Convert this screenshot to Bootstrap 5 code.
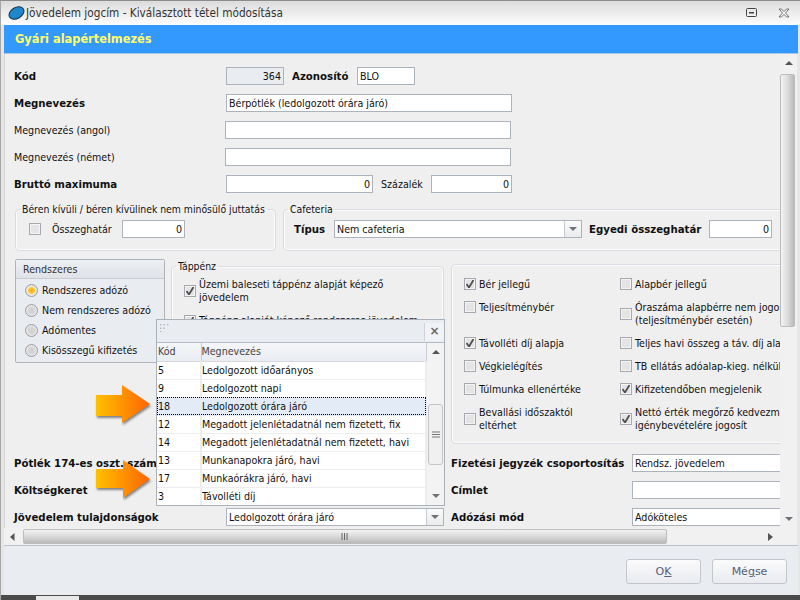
<!DOCTYPE html>
<html lang="hu">
<head>
<meta charset="utf-8">
<title>Jövedelem jogcím - Kiválasztott tétel módosítása</title>
<link href="https://cdn.jsdelivr.net/npm/bootstrap@5.3.0/dist/css/bootstrap.min.css" rel="stylesheet">
<style>
  html, body { margin: 0; width: 800px; height: 600px; overflow: hidden; }
  body { font-family: "DejaVu Sans", "Liberation Sans", sans-serif; font-stretch: condensed; font-size: 10.6px; line-height: 13px; color: #111; background: #e6e6e6; }
  b { font-family: "DejaVu Sans", sans-serif; font-stretch: normal; font-weight: 700; font-size: 10.2px; }
  .win { position: relative; width: 800px; height: 600px; overflow: hidden; border-top: 1px solid #8c8c8c; border-left: 1px solid #a6a6a6; }
  .titlebar { height: 24px; background: linear-gradient(#dcdcdc, #fdfdfd); padding-left: 7px; font-size: 11.7px; color: #333; gap: 1px; flex: none; }
  .hdr { height: 29px; margin: 0 2px 0 3px; background: #3399ff; color: #ffff66; font: 700 11.4px "DejaVu Sans", sans-serif; padding-left: 11px; flex: none; border-bottom: 1px solid #a9c6e2; }
  .mid { height: 474px; margin-left: 3px; margin-right: 3px; flex: none; }
  .view { width: 776px; overflow: hidden; background: #efeff0; padding: 13px 0 0 9px; border-left: 1px solid #d5d5d5; flex: none; }
  .vbar { width: 17px; background: #f1f1f1; position: relative; flex: none; }
  .rw { height: 18px; margin-bottom: 9px; white-space: nowrap; }
  .w211 { width: 211px; flex: none; }
  .w212 { width: 212px; flex: none; }
  .fld.form-control { height: 18px; min-height: 18px; border-radius: 0; border: 1px solid #adb3bc; padding: 0 2px; font-size: 10.6px; font-stretch: condensed; line-height: 13px; color: #111; background: #fff; box-shadow: none; flex: none; }
  .fld.num { text-align: right; }
  .fld.off { background: #e9ecf1; }
  .combo { height: 18px; border: 1px solid #adb3bc; background: #fff; padding-left: 2px; flex: none; }
  .combo > span:first-child { flex: 1; overflow: hidden; }
  .drop { width: 17px; height: 16px; border-left: 1px solid #c5cad1; background: linear-gradient(#fbfbfb, #e9ebee); flex: none; }
  .tri-d { width: 0; height: 0; border: 4px solid transparent; border-top: 4px solid #6e7278; border-bottom: 0; }
  .tri-u { width: 0; height: 0; border: 4px solid transparent; border-bottom: 4px solid #555; border-top: 0; }
  .grp { border: 1px solid #d8dce2; border-radius: 4px; margin: 0; padding: 0; min-width: 0; box-shadow: inset 0 0 0 1px #fbfbfb; flex: none; }
  .grp legend { font-size: 10.35px; line-height: 14px; margin: 0 0 0 4px; padding: 0 2px; white-space: nowrap; }
  .ck.form-check-input { width: 12px; height: 12px; margin: 0; border: 1px solid #a5a9af; border-radius: 0; background-color: #e4e4e4; box-shadow: inset 0 0 0 1px #f4f4f4; flex: none; }
  .ck.form-check-input:checked { background-color: #e4e4e4; border-color: #a5a9af; background-size: 10px 10px; background-position: center; background-image: url("data:image/svg+xml,%3Csvg xmlns='http://www.w3.org/2000/svg' viewBox='0 0 10 10'%3E%3Cpath d='M1.500 5 4 8.500 8.500 1' fill='none' stroke='%23505050' stroke-width='1.800'/%3E%3C/svg%3E"); }
  .rd.form-check-input { width: 13px; height: 13px; margin: 0; border: 1px solid #999da2; background-color: #dcdcdc; background-image: radial-gradient(circle, #cfcfcf 0, #d6d6d6 3px, #eeeeee 6px); flex: none; }
  .rd.form-check-input:checked { background-color: #e6e2d4; border-color: #999da2; background-image: radial-gradient(circle, #ffa800 0, #ffc93c 3px, #efe9d8 4px, #e2e2e2 6px); }
  .rpanel { width: 150px; height: 104px; border: 1px solid #aeb4bc; border-radius: 2px; background: #e9ecf1; flex: none; }
  .rpanel-h { height: 19px; padding-left: 7px; background: linear-gradient(#eceff3, #dfe2e7); border-bottom: 1px solid #c8ccd2; color: #333; }
  .rpanel-b { padding: 5px 0 0 9px; gap: 7px; }
  .rpanel-b label { height: 13px; gap: 4px; }
  .tapp { width: 273px; height: 187px; margin: 0 7px 0 6px; }
  .tapp-b { padding: 5px 0 0 12px; gap: 10px; }
  .right-g { width: 400px; height: 180px; margin-top: 5px; padding: 12px 0 0 12px; display: grid; grid-template-columns: 156px 1fr; grid-template-rows: 14px 27px 14px 14px 14px 27px; row-gap: 9px; white-space: nowrap; }
  .cell { gap: 3px; }
  .cell.top { align-items: flex-start !important; padding-top: 1px; }
  .low { margin-top: 8px; }
  .low-l { width: 437px; flex: none; }
  .low .rw:last-child { margin-bottom: 0; }
  .hbar { height: 17px; margin-left: 3px; margin-right: 3px; background: #f1f1f1; flex: none; position: relative; }
  .thumb-h { position: absolute; left: 19px; width: 644px; top: 1px; height: 15px; background: linear-gradient(#f2f2f2, #dcdcdc 45%, #b9b9b9); border: 1px solid #bdbdbd; border-radius: 2px; }
  .thumb-v { position: absolute; left: 0; top: 20px; width: 15px; height: 253px; background: linear-gradient(90deg, #f3f3f3, #dcdcdc 50%, #b9b9b9); border: 1px solid #bdbdbd; border-radius: 2px; }
  .foot { height: 50px; margin: 0 2px 0 3px; background: #e9ecf1; border-top: 1px solid #bcc1c8; padding: 13px 11px 0 0; gap: 11px; flex: none; }
  .gomb.btn { width: 75px; height: 25px; padding: 0; border: 1px solid #c3c7cd; border-radius: 3px; background: linear-gradient(#fbfbfc, #e9ebef); color: #54607a; font-size: 11px; line-height: 23px; }
  .gomb u { text-underline-offset: 1px; }
  .tail { height: 5px; background: #4a4a4a; flex: none; position: relative; }
  .tail i { position: absolute; left: 35px; top: 1px; width: 43px; height: 4px; background: #e8e8e8; }
  .popup { position: absolute; left: 155px; top: 318px; width: 289px; height: 187px; border: 1px solid #a9b1bb; background: #fff; z-index: 5; overflow: hidden; }
  .popup-h { height: 23px; background: #e9ecf1; border-bottom: 1px solid #b7bcc4; position: relative; flex: none; }
  .grip { position: absolute; left: 2px; top: 3px; }
  .x-btn { position: absolute; right: 0; top: 3px; width: 20px; height: 18px; border-left: 1px solid #cfd3d9; background: #f1f3f6; color: #666; font: 700 12px/16px "DejaVu Sans", sans-serif; text-align: center; }
  .popup-m { flex: 1; min-height: 0; }
  .pbar { width: 17px; background: #f3f3f3; position: relative; flex: none; }
  .pthumb { position: absolute; left: 1px; top: 61px; width: 15px; height: 61px; background: #f0f0f1; border: 1px solid #c4c4c4; border-radius: 3px; }
  .tb.table { width: 271px; margin: 0; table-layout: fixed; font-size: 10.6px; line-height: 13px; border-collapse: collapse; --bs-table-bg: #fff; }
  .tb.table td, .tb.table th { height: 18px; padding: 0 1px; border: 0; border-bottom: 1px solid #ededed; border-right: 2px solid #ededed; font-weight: 400; color: #111; white-space: nowrap; overflow: hidden; vertical-align: middle; }
  .tb.table td:last-child, .tb.table th:last-child { padding-left: 0; }
  .tb.table th { background: linear-gradient(#f4f6f9, #e9ecf1); color: #444; border-bottom: 1px solid #d5d8dd; border-right: 1px solid #c9cdd3; }
  .tb.table tr.sel { outline: 1px dotted #000; outline-offset: -1px; }
  .tb.table tr.sel td { background: #e3ecf6; border-bottom-color: #e3ecf6; border-right-color: #e3ecf6; }
  .nyil { position: absolute; z-index: 6; filter: drop-shadow(1px 2px 1px rgba(0,0,0,.45)); }
</style>
</head>
<body>
<div class="win d-flex flex-column">
  <div class="titlebar d-flex align-items-center">
    <svg width="17" height="16" viewBox="0 0 17 16"><ellipse cx="8.500" cy="8" rx="8" ry="5.500" transform="rotate(-30 8.500 8)" fill="#1f86c9" stroke="#0d3553"/></svg>
    <span>Jövedelem jogcím - Kiválasztott tétel módosítása</span>
    <svg class="ms-auto" width="12" height="10" viewBox="0 0 12 10"><rect x=".5" y=".5" width="10" height="8" rx="1" fill="none" stroke="#444"/><rect x="3" y="4" width="5" height="1.500" fill="#444"/></svg>
    <svg style="margin:0 10px 0 19px" width="12" height="10" viewBox="0 0 12 10"><path d="M1 1h2.500L6 3.500 8.500 1H11L7.500 5 11 9H8.500L6 6.500 3.500 9H1l3.500-4z" fill="#f4f4f4" stroke="#555" stroke-width=".8"/></svg>
  </div>
  <div class="hdr d-flex align-items-center">Gyári alapértelmezés</div>
  <div class="mid d-flex">
    <div class="view">
      <div class="rw d-flex align-items-center"><b class="w212">Kód</b><input class="form-control fld num off" style="width:58px" value="364" readonly><b class="ms-2" style="width:65px">Azonosító</b><input class="form-control fld" style="width:58px" value="BLO"></div>
      <div class="rw d-flex align-items-center"><b class="w212">Megnevezés</b><input class="form-control fld" style="width:286px" value="Bérpótlék (ledolgozott órára járó)"></div>
      <div class="rw d-flex align-items-center"><span class="w211">Megnevezés (angol)</span><input class="form-control fld" style="width:286px"></div>
      <div class="rw d-flex align-items-center"><span class="w211">Megnevezés (német)</span><input class="form-control fld" style="width:286px"></div>
      <div class="rw d-flex align-items-center mb-0"><b class="w212">Bruttó maximuma</b><input class="form-control fld num" style="width:147px" value="0"><span style="width:50px;margin-left:8px">Százalék</span><input class="form-control fld num" style="width:81px" value="0"></div>

      <div class="d-flex" style="margin-top:9px">
        <fieldset class="grp" style="width:261px;height:49px;margin-left:1px">
          <legend class="float-none w-auto">Béren kívüli / béren kívülinek nem minősülő juttatás</legend>
          <div class="d-flex align-items-center" style="padding:4px 0 0 13px">
            <input class="form-check-input ck" type="checkbox">
            <span style="margin-left:11px;width:70px">Összeghatár</span>
            <input class="form-control fld num" style="width:63px" value="0">
          </div>
        </fieldset>
        <fieldset class="grp" style="width:520px;height:49px;margin-left:7px">
          <legend class="float-none w-auto">Cafeteria</legend>
          <div class="d-flex align-items-center" style="padding:4px 0 0 10px">
            <b style="width:40px">Típus</b>
            <div class="combo d-flex align-items-center" style="width:248px"><span>Nem cafeteria</span><span class="drop d-flex align-items-center justify-content-center"><span class="tri-d"></span></span></div>
            <b style="margin-left:7px;width:120px">Egyedi összeghatár</b>
            <input class="form-control fld num" style="width:63px" value="0">
          </div>
        </fieldset>
      </div>

      <div class="d-flex" style="margin-top:8px;margin-left:1px">
        <div class="rpanel">
          <div class="rpanel-h d-flex align-items-center">Rendszeres</div>
          <div class="rpanel-b d-flex flex-column">
            <label class="d-flex align-items-center"><input class="form-check-input rd" type="radio" name="ado" checked>Rendszeres adózó</label>
            <label class="d-flex align-items-center"><input class="form-check-input rd" type="radio" name="ado">Nem rendszeres adózó</label>
            <label class="d-flex align-items-center"><input class="form-check-input rd" type="radio" name="ado">Adómentes</label>
            <label class="d-flex align-items-center"><input class="form-check-input rd" type="radio" name="ado">Kisösszegű kifizetés</label>
          </div>
        </div>
        <fieldset class="grp tapp">
          <legend class="float-none w-auto">Táppénz</legend>
          <div class="tapp-b d-flex flex-column">
            <div class="cell d-flex align-items-center"><input class="form-check-input ck" type="checkbox" checked><span>Üzemi baleseti táppénz alapját képező<br>jövedelem</span></div>
            <div class="cell d-flex align-items-center"><input class="form-check-input ck" type="checkbox" checked><span>Táppénz alapját képező rendszeres jövedelem</span></div>
          </div>
        </fieldset>
        <div class="grp right-g">
          <div class="cell d-flex align-items-center"><input class="form-check-input ck" type="checkbox" checked><span>Bér jellegű</span></div>
          <div class="cell d-flex align-items-center"><input class="form-check-input ck" type="checkbox"><span>Alapbér jellegű</span></div>
          <div class="cell top d-flex align-items-center"><input class="form-check-input ck" type="checkbox"><span>Teljesítménybér</span></div>
          <div class="cell d-flex align-items-center"><input class="form-check-input ck" type="checkbox"><span>Óraszáma alapbérre nem jogosít<br>(teljesítménybér esetén)</span></div>
          <div class="cell d-flex align-items-center"><input class="form-check-input ck" type="checkbox" checked><span>Távolléti díj alapja</span></div>
          <div class="cell d-flex align-items-center"><input class="form-check-input ck" type="checkbox"><span>Teljes havi összeg a táv. díj alapja</span></div>
          <div class="cell d-flex align-items-center"><input class="form-check-input ck" type="checkbox"><span>Végkielégítés</span></div>
          <div class="cell d-flex align-items-center"><input class="form-check-input ck" type="checkbox"><span>TB ellátás adóalap-kieg. nélkül</span></div>
          <div class="cell d-flex align-items-center"><input class="form-check-input ck" type="checkbox"><span>Túlmunka ellenértéke</span></div>
          <div class="cell d-flex align-items-center"><input class="form-check-input ck" type="checkbox" checked><span>Kifizetendőben megjelenik</span></div>
          <div class="cell d-flex align-items-center"><input class="form-check-input ck" type="checkbox"><span>Bevallási időszaktól<br>eltérhet</span></div>
          <div class="cell d-flex align-items-center"><input class="form-check-input ck" type="checkbox" checked><span>Nettó érték megőrző kedvezmény<br>igénybevételére jogosít</span></div>
        </div>
      </div>

      <div class="low d-flex">
        <div class="low-l">
          <div class="rw d-flex align-items-center"><b class="w212">Pótlék 174-es oszt. száma</b></div>
          <div class="rw d-flex align-items-center"><b class="w212">Költségkeret</b></div>
          <div class="rw d-flex align-items-center"><b class="w212">Jövedelem tulajdonságok</b><div class="combo d-flex align-items-center" style="width:218px"><span>Ledolgozott órára járó</span><span class="drop d-flex align-items-center justify-content-center"><span class="tri-d"></span></span></div></div>
        </div>
        <div>
          <div class="rw d-flex align-items-center"><b style="width:181px;flex:none">Fizetési jegyzék csoportosítás</b><input class="form-control fld" style="width:200px" value="Rendsz. jövedelem"></div>
          <div class="rw d-flex align-items-center"><b style="width:181px;flex:none">Címlet</b><input class="form-control fld" style="width:200px"></div>
          <div class="rw d-flex align-items-center"><b style="width:181px;flex:none">Adózási mód</b><input class="form-control fld" style="width:200px" value="Adóköteles"></div>
        </div>
      </div>
    </div>
    <div class="vbar d-flex flex-column align-items-center">
      <span class="tri-u" style="margin-top:7px"></span>
      <span class="thumb-v"></span>
      <span class="tri-d mt-auto" style="margin-bottom:7px"></span>
    </div>
  </div>
  <div class="hbar d-flex align-items-center justify-content-between">
    <svg style="margin-left:6px" width="5" height="8" viewBox="0 0 5 8"><path d="M4.500 0v8L0 4z" fill="#555"/></svg>
    <span class="thumb-h d-flex align-items-center justify-content-center"><svg width="8" height="7" viewBox="0 0 8 7"><path d="M1 0v7M3.500 0v7M6 0v7" stroke="#666"/></svg></span>
    <svg style="margin-right:24px" width="5" height="8" viewBox="0 0 5 8"><path d="M0 0v8l5-4z" fill="#555"/></svg>
  </div>
  <div class="foot d-flex justify-content-end">
    <button class="btn gomb" type="button">O<u>K</u></button>
    <button class="btn gomb" type="button">Mé<u>g</u>se</button>
  </div>
  <div class="tail"><i></i></div>

  <div class="popup d-flex flex-column">
    <div class="popup-h">
      <svg class="grip" width="12" height="9" viewBox="0 0 12 9"><path d="M1 1h1.500v1.500H1zM4.500 1H6v1.500H4.500zM8 1h1.500v1.500H8zM1 4.500h1.500V6H1zM4.500 4.500H6V6H4.500zM1 8h1.500v1H1z" fill="#b5bac1"/></svg>
      <span class="x-btn">×</span>
    </div>
    <div class="popup-m d-flex">
      <table class="table tb">
        <colgroup><col style="width:44px"><col></colgroup>
        <thead><tr><th>Kód</th><th>Megnevezés</th></tr></thead>
        <tbody>
          <tr><td>5</td><td>Ledolgozott időarányos</td></tr>
          <tr><td>9</td><td>Ledolgozott napi</td></tr>
          <tr class="sel"><td>18</td><td>Ledolgozott órára járó</td></tr>
          <tr><td>12</td><td>Megadott jelenlétadatnál nem fizetett, fix</td></tr>
          <tr><td>14</td><td>Megadott jelenlétadatnál nem fizetett, havi</td></tr>
          <tr><td>13</td><td>Munkanapokra járó, havi</td></tr>
          <tr><td>17</td><td>Munkaórákra járó, havi</td></tr>
          <tr><td>3</td><td>Távolléti díj</td></tr>
        </tbody>
      </table>
      <div class="pbar d-flex flex-column align-items-center">
        <span class="tri-u" style="margin-top:7px"></span>
        <span class="pthumb d-flex align-items-center justify-content-center"><svg width="8" height="7" viewBox="0 0 8 7"><path d="M0 1h8M0 3.500h8M0 6h8" stroke="#777"/></svg></span>
        <span class="tri-d mt-auto" style="margin-bottom:7px"></span>
      </div>
    </div>
  </div>

  <svg class="nyil" style="left:95px;top:384px" width="55" height="39" viewBox="0 0 55 39">
    <defs><linearGradient id="og" x1="0" x2="1" y1="0" y2="0"><stop offset="0" stop-color="#ffc000"/><stop offset="1" stop-color="#ff6400"/></linearGradient></defs>
    <path d="M0 10H26V0L54 19 26 38V31H0z" fill="url(#og)"/>
  </svg>
  <svg class="nyil" style="left:95px;top:459px" width="55" height="39" viewBox="0 0 55 39">
    <path d="M0 9H27V0L54 19 27 38V28H0z" fill="url(#og)"/>
  </svg>
</div>
<script src="https://cdn.jsdelivr.net/npm/bootstrap@5.3.0/dist/js/bootstrap.bundle.min.js"></script>
</body>
</html>
